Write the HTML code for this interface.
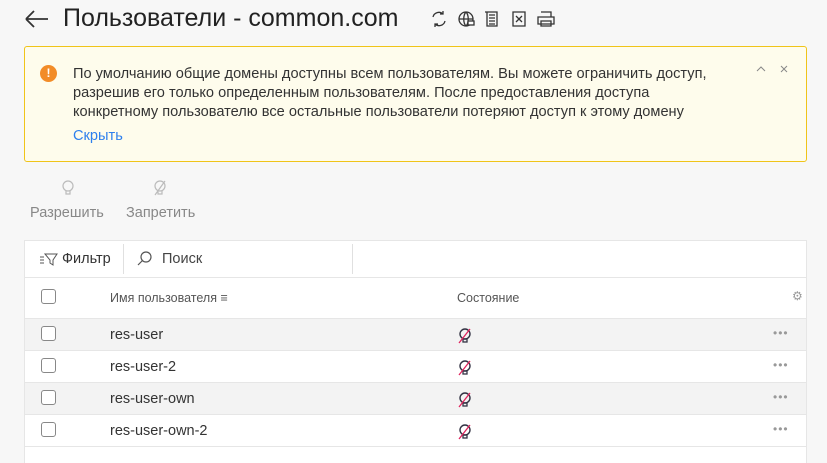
<!DOCTYPE html>
<html><head><meta charset="utf-8"><style>
*{box-sizing:border-box;margin:0;padding:0}
body{width:827px;height:463px;overflow:hidden;background:#f7f7f7;font-family:"Liberation Sans","DejaVu Sans",sans-serif;color:#333;position:relative}
.abs{position:absolute}
.title{left:63px;top:4px;font-size:25px;color:#222;white-space:nowrap}
.alert{left:24px;top:46px;width:783px;height:116px;background:#fefcec;border:1px solid #f0c419;border-radius:3px}
.alert p{position:absolute;left:48px;top:18px;font-size:14.6px;line-height:19px;color:#333;white-space:nowrap}
.hide{position:absolute;left:48px;top:81px;font-size:14.6px;color:#2f80ed}
.warn{position:absolute;left:15px;top:18px;width:17px;height:17px;border-radius:50%;background:#f28c28;color:#fff;font-size:12px;font-weight:bold;text-align:center;line-height:17px}
.tbl{left:24px;top:240px;width:783px;height:223px;background:#fff;border:1px solid #e6e6e6;border-bottom:none}
.row{position:absolute;left:0;width:781px;height:32px;border-bottom:1px solid #e6e6e6}
.cb{position:absolute;left:16px;width:15px;height:15px;border:1px solid #888;border-radius:3px;background:#fff}
.name{position:absolute;left:85px;font-size:14.5px;color:#333}
.dots{position:absolute;left:748px;font-size:12px;color:#999;letter-spacing:1px}
.ic{position:absolute;left:432px}
</style></head><body>
<svg class="abs" style="left:24px;top:9px" width="26" height="20" viewBox="0 0 26 20"><path d="M2 10H24M2 10L10 2M2 10L10 18" stroke="#333" stroke-width="1.8" fill="none"/></svg>
<div class="abs title">Пользователи - common.com</div>
<svg class="abs" style="left:430px;top:9px" width="130" height="20" viewBox="0 0 130 20" fill="none" stroke="#333" stroke-width="1.3">
<path d="M3 8a6 6 0 0 1 10-3M15 12a6 6 0 0 1-10 3M13 2v3h-3M5 18v-3h3"/>
<circle cx="36" cy="10" r="7"/><path d="M29 10h14M36 3c-3 3-3 11 0 14M36 3c3 3 3 11 0 14"/><rect x="38" y="12" width="6" height="4" fill="#fff"/>
<path d="M57 3h10v14h-10zM55 3h2M59 6h6M59 9h6M59 12h6M59 15h6"/>
<path d="M83 3h12v14h-12zM86 7l6 6M92 7l-6 6" />
<path d="M108 8h16v7h-16zM111 3h10v5M111 12h10v5h-10z"/>
</svg>
<div class="abs alert"><div class="warn">!</div>
<p>По умолчанию общие домены доступны всем пользователям. Вы можете ограничить доступ,<br>разрешив его только определенным пользователям. После предоставления доступа<br>конкретному пользователю все остальные пользователи потеряют доступ к этому домену</p>
<div class="hide">Скрыть</div>
<svg style="position:absolute;left:730px;top:16px" width="40" height="12" viewBox="0 0 40 12" fill="none" stroke="#888" stroke-width="1"><path d="M2 8l4-4 4 4M26 3l6 6M32 3l-6 6"/></svg>
</div>
<svg class="abs" style="left:60px;top:178px" width="120" height="20" viewBox="0 0 120 20" fill="none" stroke="#bbb" stroke-width="1.2"><circle cx="8" cy="8" r="5"/><path d="M6 13v3h4v-3"/><circle cx="100" cy="8" r="5"/><path d="M98 13v3h4v-3M95 17l10-14"/></svg>
<div class="abs" style="left:30px;top:205px;font-size:14.5px;color:#888">Разрешить</div>
<div class="abs" style="left:126px;top:205px;font-size:14.5px;color:#888">Запретить</div>
<div class="abs tbl">
<div class="row" style="top:0;height:37px;border-bottom:1px solid #e6e6e6">
<svg style="position:absolute;left:14px;top:11px" width="20" height="14" viewBox="0 0 20 14" fill="none" stroke="#555" stroke-width="1"><path d="M1 5h4M1 8h4M1 11h4M6 2h12l-4 6v5l-3-2V8z"/></svg>
<div style="position:absolute;left:37px;top:10px;font-size:14.5px;color:#333">Фильтр</div>
<div style="position:absolute;left:98px;top:3px;width:1px;height:30px;background:#e0e0e0"></div>
<svg style="position:absolute;left:112px;top:10px" width="16" height="16" viewBox="0 0 16 16" fill="none" stroke="#555" stroke-width="1.2"><circle cx="9" cy="6" r="5"/><path d="M5.5 9.5L1 14"/></svg>
<div style="position:absolute;left:137px;top:10px;font-size:14.5px;color:#444">Поиск</div>
<div style="position:absolute;left:327px;top:3px;width:1px;height:30px;background:#e0e0e0"></div>
</div>
<div class="row" style="top:37px;height:41px">
<div class="cb" style="top:11px"></div>
<div style="position:absolute;left:85px;top:13px;font-size:12.5px;color:#555">Имя пользователя ≡</div>
<div style="position:absolute;left:432px;top:13px;font-size:12.5px;color:#555">Состояние</div>
<div style="position:absolute;left:767px;top:11px;font-size:12px;color:#999">⚙</div>
</div>
<div class="row" style="top:78px;background:#f3f3f3"><div class="cb" style="top:7px"></div><div class="name" style="top:8px">res-user</div><svg class="ic" style="top:8px" width="16" height="18" viewBox="0 0 16 18"><circle cx="8" cy="7" r="5" fill="none" stroke="#334" stroke-width="1.4"/><rect x="6" y="12" width="4" height="3" fill="none" stroke="#334" stroke-width="1.3"/><path d="M2 16L13 2" stroke="#e0245e" stroke-width="1.3"/></svg><div class="dots" style="top:7px">•••</div></div>
<div class="row" style="top:110px"><div class="cb" style="top:7px"></div><div class="name" style="top:8px">res-user-2</div><svg class="ic" style="top:8px" width="16" height="18" viewBox="0 0 16 18"><circle cx="8" cy="7" r="5" fill="none" stroke="#334" stroke-width="1.4"/><rect x="6" y="12" width="4" height="3" fill="none" stroke="#334" stroke-width="1.3"/><path d="M2 16L13 2" stroke="#e0245e" stroke-width="1.3"/></svg><div class="dots" style="top:7px">•••</div></div>
<div class="row" style="top:142px;background:#f3f3f3"><div class="cb" style="top:7px"></div><div class="name" style="top:8px">res-user-own</div><svg class="ic" style="top:8px" width="16" height="18" viewBox="0 0 16 18"><circle cx="8" cy="7" r="5" fill="none" stroke="#334" stroke-width="1.4"/><rect x="6" y="12" width="4" height="3" fill="none" stroke="#334" stroke-width="1.3"/><path d="M2 16L13 2" stroke="#e0245e" stroke-width="1.3"/></svg><div class="dots" style="top:7px">•••</div></div>
<div class="row" style="top:174px"><div class="cb" style="top:7px"></div><div class="name" style="top:8px">res-user-own-2</div><svg class="ic" style="top:8px" width="16" height="18" viewBox="0 0 16 18"><circle cx="8" cy="7" r="5" fill="none" stroke="#334" stroke-width="1.4"/><rect x="6" y="12" width="4" height="3" fill="none" stroke="#334" stroke-width="1.3"/><path d="M2 16L13 2" stroke="#e0245e" stroke-width="1.3"/></svg><div class="dots" style="top:7px">•••</div></div>
</div>
</body></html>
